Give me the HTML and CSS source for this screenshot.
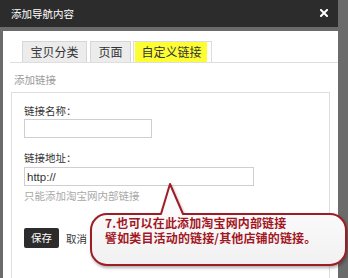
FILE: index.html
```html
<!DOCTYPE html>
<html lang="zh-CN">
<head>
<meta charset="utf-8">
<link rel="stylesheet" href="styles.css">
</head>
<body>
<div class="stage">
  <div class="dialog">
    <div class="titlebar">
      <span class="title">添加导航内容</span>
      <svg class="close" width="8" height="8" viewBox="0 0 8 8"><path d="M1 1L7 7M7 1L1 7" stroke="#fff" stroke-width="2" stroke-linecap="square"/></svg>
    </div>
    <div class="content">
      <div class="tabs">
        <div class="tab tab-a">宝贝分类</div>
        <div class="tab tab-b">页面</div>
        <div class="tab tab-active"><span class="hl">自定义链接</span></div>
      </div>
      <div class="section-label">添加链接</div>
      <div class="form-box">
        <div class="label">链接名称：</div>
        <input class="field field-short" type="text" value="">
        <div class="label label-2">链接地址：</div>
        <input class="field field-long" type="text" value="http://">
        <div class="hint">只能添加淘宝网内部链接</div>
        <div class="actions">
          <button class="btn-save">保存</button>
          <span class="cancel">取消</span>
        </div>
      </div>
    </div>
  </div>
  <div class="callout">
    <svg class="callout-shape" width="348" height="278" viewBox="0 0 348 278">
      <defs>
        <linearGradient id="cg" x1="0" y1="0" x2="0" y2="1">
          <stop offset="0" stop-color="#ffffff"/>
          <stop offset="1" stop-color="#f1f1f1"/>
        </linearGradient>
        <filter id="sh" x="-10%" y="-10%" width="120%" height="130%">
          <feDropShadow dx="1" dy="2" stdDeviation="1.5" flood-color="#000" flood-opacity="0.3"/>
        </filter>
      </defs>
      <path d="M107 214 L161 214 L170 184 L183 214 L330 214 A16 16 0 0 1 346 230 L346 249 A16 16 0 0 1 330 265 L107 265 A16 16 0 0 1 91 249 L91 230 A16 16 0 0 1 107 214 Z" fill="url(#cg)" stroke="#9e1d25" stroke-width="2" stroke-linejoin="round" filter="url(#sh)"/>
    </svg>
    <div class="callout-text">
      <div>7.也可以在此添加淘宝网内部链接</div>
      <div>譬如类目活动的链接/其他店铺的链接。</div>
    </div>
  </div>
</div>
</body>
</html>
```
FILE: styles.css
```css
* { box-sizing: border-box; }
html, body {
  margin: 0;
  padding: 0;
}
body {
  width: 348px;
  height: 278px;
  overflow: hidden;
  background: #6b6b6b;
  font-family: "Noto Sans CJK SC", "Noto Sans", sans-serif;
}
.stage {
  position: relative;
  width: 348px;
  height: 278px;
  overflow: hidden;
}
.dialog {
  width: 338px;
}
.titlebar {
  height: 27px;
  background: #2c2c2c;
  display: flex;
  align-items: center;
  justify-content: space-between;
  padding: 0 10px 0 11px;
}
.title {
  color: #fff;
  font-size: 10.5px;
  line-height: 27px;
}
.close {
  display: block;
  margin-top: -2px;
}
.content {
  margin: 4px 0 0 3px;
  background: #fff;
  height: 247px;
  overflow: hidden;
}
.tabs {
  display: flex;
  margin-left: 7px;
  padding: 10px 0 0 12px;
  border-bottom: 1px solid #dedede;
}
.tab {
  height: 21px;
  font-size: 12px;
  line-height: 20px;
  color: #333;
  text-align: center;
  border: 1px solid #d6d6d6;
  border-bottom: none;
  background: #ececec;
}
.tab-a { width: 65px; }
.tab-b { width: 41px; margin-left: 3px; }
.tab-active {
  width: 79px;
  margin-left: 2px;
  background: #fff;
  border-color: #dcdcdc;
  padding: 0 4px 0 1px;
  display: flex;
}
.hl {
  display: block;
  flex: 1;
  background: #fdfd33;
  line-height: 20px;
  padding-left: 1px;
}
.section-label {
  margin: 11px 0 0 11px;
  font-size: 10.5px;
  line-height: 12px;
  color: #9a9a9a;
}
.form-box {
  margin: 6px 0 0 8px;
  width: 319px;
  height: 190px;
  border: 1px solid #dedede;
  padding: 12px 0 0 12px;
}
.label {
  font-size: 10.5px;
  line-height: 12px;
  color: #333;
}
.label-2 { margin-top: 14px; }
.field {
  display: block;
  height: 19px;
  border: 1px solid #cfcfcf;
  background: #fff;
  outline: none;
  padding: 0 2px;
  font-family: "Liberation Sans", Arial, sans-serif;
  font-size: 11.5px;
  color: #333;
}
.field-short { width: 128px; margin-top: 2px; }
.field-long { width: 230px; margin-top: 3px; }
.hint {
  margin-top: 4px;
  font-size: 10.5px;
  line-height: 12px;
  color: #a8a8a8;
}
.actions {
  margin-top: 26px;
  display: flex;
  align-items: center;
}
.btn-save {
  width: 35px;
  height: 20px;
  border: none;
  border-radius: 2px;
  background: #2c2c2c;
  color: #fff;
  font-family: "Noto Sans CJK SC", sans-serif;
  font-size: 10.5px;
  line-height: 20px;
  padding: 0;
}
.cancel {
  margin-left: 7px;
  font-size: 10.5px;
  color: #333;
}
.callout {
  position: absolute;
  left: 0;
  top: 0;
  width: 348px;
  height: 278px;
  pointer-events: none;
}
.callout-shape {
  position: absolute;
  left: 0;
  top: 0;
}
.callout-text {
  position: absolute;
  left: 105px;
  top: 215px;
  font-size: 12px;
  font-weight: bold;
  line-height: 15px;
  color: #a3161f;
  letter-spacing: 0.15px;
  white-space: nowrap;
}
```
